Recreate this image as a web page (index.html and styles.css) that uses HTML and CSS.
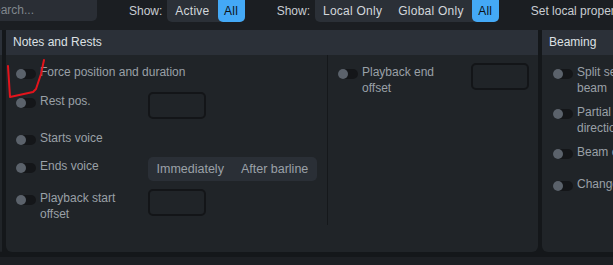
FILE: index.html
```html
<!DOCTYPE html>
<html lang="en">
<head>
    <meta charset="UTF-8">
    <meta name="viewport" content="width=device-width, initial-scale=1.0">
    <title>Properties</title>
    <link rel="stylesheet" href="styles.css">
</head>
<body>
    <div class="toolbar">
        <div class="search">Search...</div>
        <div class="group">
            <span class="show">Show:</span>
            <div class="seg">
                <span class="seg-item">Active</span>
                <span class="seg-item on">All</span>
            </div>
        </div>
        <div class="group">
            <span class="show">Show:</span>
            <div class="seg">
                <span class="seg-item">Local Only</span>
                <span class="seg-item">Global Only</span>
                <span class="seg-item on">All</span>
            </div>
        </div>
        <div class="group">
            <span class="show">Set local properties in</span>
        </div>
    </div>

    <div class="panels">
        <div class="panel stub">
            <div class="panel-head"></div>
            <div class="panel-body"></div>
        </div>

        <div class="panel notes">
            <div class="panel-head">Notes and Rests</div>
            <div class="panel-body">
                <div class="col left">
                    <div class="row r1">
                        <span class="toggle"></span>
                        <span class="label">Force position and duration</span>
                    </div>
                    <div class="row r2">
                        <span class="toggle"></span>
                        <span class="label">Rest pos.</span>
                        <span class="input"></span>
                    </div>
                    <div class="row r3">
                        <span class="toggle"></span>
                        <span class="label">Starts voice</span>
                    </div>
                    <div class="row r4">
                        <span class="toggle"></span>
                        <span class="label">Ends voice</span>
                        <div class="seg dim">
                            <span class="seg-item">Immediately</span>
                            <span class="seg-item">After barline</span>
                        </div>
                    </div>
                    <div class="row">
                        <span class="toggle"></span>
                        <span class="label two">Playback start offset</span>
                        <span class="input"></span>
                    </div>
                </div>
                <div class="col right">
                    <div class="row">
                        <span class="toggle"></span>
                        <span class="label wide two">Playback end offset</span>
                        <span class="input"></span>
                    </div>
                </div>
            </div>
        </div>

        <div class="panel beaming">
            <div class="panel-head">Beaming</div>
            <div class="panel-body">
                <div class="col">
                    <div class="row b1">
                        <span class="toggle"></span>
                        <span class="label two narrow">Split secondary beam</span>
                    </div>
                    <div class="row b1">
                        <span class="toggle"></span>
                        <span class="label two narrow">Partial beam direction</span>
                    </div>
                    <div class="row b2">
                        <span class="toggle"></span>
                        <span class="label">Beam color</span>
                    </div>
                    <div class="row">
                        <span class="toggle"></span>
                        <span class="label">Change beam mode</span>
                    </div>
                </div>
            </div>
        </div>
    </div>
    <div class="statusbar"></div>

    <!-- hand-drawn mark over the first toggle -->
    <svg class="scribble" width="60" height="110" viewBox="0 0 60 110">
        <path d="M8 66 L10 97 L33 92 L36 89 L41 74 L44 60" fill="none" stroke="#e3141c" stroke-width="2" stroke-linejoin="round" stroke-linecap="round"/>
    </svg>
</body>
</html>
```

FILE: styles.css
```css
body {
    margin: 0;
    width: 613px;
    height: 265px;
    overflow: hidden;
    background: #1b1e22;
    font-family: "Liberation Sans", Arial, sans-serif;
    font-size: 12px;
    color: #c9cdd2;
}

.toolbar {
    height: 30px;
    display: flex;
    align-items: flex-start;
    gap: 32px;
    white-space: nowrap;
}

.toolbar > * {
    flex-shrink: 0;
}

.search {
    width: 111px;
    height: 21px;
    line-height: 20px;
    margin-left: -30px;
    padding-left: 16px;
    background: #2a2e35;
    border-radius: 0 0 5px 5px;
    color: #80868d;
}

.group {
    display: flex;
    align-items: center;
    gap: 5px;
    height: 22px;
}

.seg {
    display: flex;
    height: 22px;
    background: #2b3037;
    border-radius: 0 0 5px 5px;
}

.seg-item {
    padding: 0 8px;
    line-height: 22px;
    border-radius: 5px;
    color: #d3d7db;
    letter-spacing: 0.25px;
}

.seg-item.on {
    background: #44a9f6;
    color: #0d1217;
    border-radius: 0 0 5px 5px;
    padding: 0 6.5px;
}

.panels {
    display: flex;
    gap: 4px;
    height: 222px;
    padding-bottom: 5px;
    background: #14171a;
}

.panel {
    display: flex;
    flex-direction: column;
    flex-shrink: 0;
    background: #202428;
    border-radius: 0 0 6px 6px;
    overflow: hidden;
}

.panel.stub {
    width: 2px;
}

.panel.notes {
    width: 532px;
}

.panel.beaming {
    width: 200px;
}

.panel-head {
    height: 25px;
    line-height: 25px;
    padding-left: 7px;
    background: #2b3038;
    color: #dde0e4;
    flex-shrink: 0;
}

.panel-body {
    display: flex;
    flex: 1;
}

.col {
    display: flex;
    flex-direction: column;
    padding: 9px 0 0 10px;
}

.col.left {
    width: 311px;
    border-right: 1px solid #15181b;
    margin-bottom: 27px;
}

.col.right {
    flex: 1;
}

.beaming .col {
    padding-left: 11px;
}

.row {
    display: flex;
    align-items: flex-start;
    min-height: 28px;
}

.row.r1 { min-height: 29px; }
.row.r2 { min-height: 37px; }
.row.r3 { min-height: 28px; }
.row.r4 { min-height: 32px; }
.row.b1 { min-height: 40px; }
.row.b2 { min-height: 32px; }

.toggle {
    position: relative;
    width: 20px;
    height: 10px;
    margin: 5px 4px 0 0;
    border-radius: 5px;
    background: #141619;
    flex-shrink: 0;
}

.toggle::before {
    content: "";
    position: absolute;
    left: 0;
    top: 0;
    width: 10px;
    height: 10px;
    border-radius: 50%;
    background: #5b626b;
}

.label {
    width: 108px;
    flex-shrink: 0;
    line-height: 16px;
    color: #9aa0a7;
    white-space: nowrap;
}

.label.two {
    width: 86px;
    padding-right: 22px;
    white-space: normal;
    line-height: 15.5px;
    padding-top: 1px;
}

.label.wide {
    padding-right: 23px;
}

.label.narrow {
    width: 100px;
    padding-right: 0;
}

.input {
    width: 54px;
    height: 23px;
    margin-top: -1px;
    border: 2px solid #131518;
    border-radius: 5px;
    flex-shrink: 0;
}

.seg.dim {
    margin-top: -1px;
    height: 24px;
    border-radius: 5px;
    background: #2a2f36;
}

.seg.dim .seg-item {
    line-height: 24px;
    color: #9ba1a8;
    padding: 0 8.5px;
    font-size: 12.5px;
    letter-spacing: 0;
}

.statusbar {
    height: 8px;
    background: #1c1f23;
}

.scribble {
    position: absolute;
    left: 0;
    top: 0;
}
```
